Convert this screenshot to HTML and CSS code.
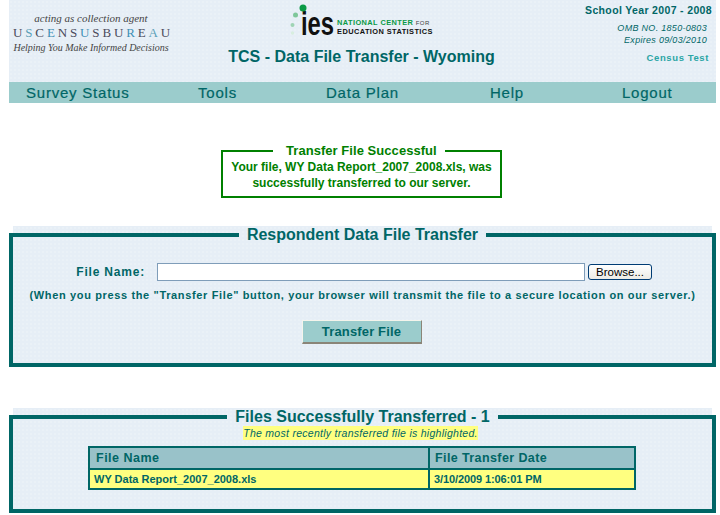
FILE: index.html
```html
<!DOCTYPE html>
<html lang="en">

<head>
    <meta charset="UTF-8">
    <title>TCS - Data File Transfer - Wyoming</title>
    <link rel="stylesheet" href="styles.css">
</head>

<body>
    <div class="header">
        <div class="census">
            <p class="census-top">acting as collection agent</p>
            <p class="census-name"><span>U</span><span class="c1">S</span><span>C</span><span class="c2">E</span><span>N</span><span>S</span><span class="c2">U</span><span>S</span><span>B</span><span>U</span><span class="c2">R</span><span>E</span><span class="c1">A</span><span>U</span></p>
            <p class="census-tag">Helping You Make Informed Decisions</p>
        </div>
        <div class="center">
            <div class="ies">
                <svg class="ies-dots" width="17" height="38" viewBox="0 0 17 38">
                    <circle cx="13" cy="8" r="3.5" fill="#0a9a46" />
                    <circle cx="5.5" cy="15" r="2.5" fill="#7fc79a" />
                    <circle cx="2.5" cy="25" r="2" fill="#9ed4b4" />
                    <circle cx="2.5" cy="33" r="1.7" fill="#d8eee0" />
                </svg>
                <span class="ies-word">ies</span>
                <div class="ies-name">
                    <div class="ies-line ies-green">NATIONAL CENTER <small>FOR</small></div>
                    <div class="ies-line">EDUCATION STATISTICS</div>
                </div>
            </div>
            <h1>TCS - Data File Transfer - Wyoming</h1>
        </div>
        <div class="meta">
            <p class="year">School Year 2007 - 2008</p>
            <p class="omb">OMB NO. 1850-0803<br>Expires 09/03/2010</p>
            <p class="test">Census Test</p>
        </div>
    </div>

    <div class="nav">
        <a href="#">Survey Status</a>
        <a href="#">Tools</a>
        <a href="#">Data Plan</a>
        <a href="#">Help</a>
        <a href="#">Logout</a>
    </div>

    <fieldset class="success">
        <legend>Transfer File Successful</legend>
        <p>Your file, WY Data Report_2007_2008.xls, was<br>successfully transferred to our server.</p>
    </fieldset>

    <div class="panel upload">
        <fieldset>
            <legend>Respondent Data File Transfer</legend>
            <div class="file-row">
                <label for="file">File Name:</label>
                <input id="file" type="text">
                <button class="browse" type="button">Browse...</button>
            </div>
            <p class="hint">(When you press the "Transfer File" button, your browser will transmit the file to a secure location on our server.)</p>
            <button class="transfer" type="button">Transfer File</button>
        </fieldset>
    </div>

    <div class="panel files">
        <fieldset>
            <legend>Files Successfully Transferred - 1</legend>
            <p class="note"><span>The most recently transferred file is highlighted.</span></p>
            <table>
                <thead>
                    <tr>
                        <th>File Name</th>
                        <th>File Transfer Date</th>
                    </tr>
                </thead>
                <tbody>
                    <tr>
                        <td>WY Data Report_2007_2008.xls</td>
                        <td class="date">3/10/2009 1:06:01 PM</td>
                    </tr>
                </tbody>
            </table>
        </fieldset>
    </div>
</body>

</html>
```

FILE: styles.css
```css
/* Reset */
body,
p,
h1,
fieldset,
legend {
    margin: 0;
    padding: 0;
}

body {
    font-family: 'Liberation Sans', Arial, sans-serif;
    background-color: white;
    color: #006666;
    padding: 0 4px 0 9px;
    height: 515px;
    box-sizing: border-box;
    overflow: hidden;
}

/* Header */
.header {
    display: flex;
    height: 82px;
    background-color: #e6eef6;
    background-image: radial-gradient(#eaf1f7 1px, transparent 1px);
    background-size: 4px 4px;
}

.census {
    width: 164px;
    padding-top: 12px;
    text-align: center;
    font-family: 'Liberation Serif', serif;
    color: #444;
}

.census-top {
    font-size: 11px;
    font-style: italic;
    line-height: 12px;
}

.census-name {
    font-size: 13px;
    letter-spacing: 2.85px;
    line-height: 15px;
    margin-top: 1px;
    padding-left: 4px;
    white-space: nowrap;
    color: #4a4a5a;
}

.census-name .c1 {
    color: #5a9fb8;
}

.census-name .c2 {
    color: #3f90b5;
}

.census-tag {
    font-size: 10px;
    font-style: italic;
    line-height: 13px;
    margin-top: 1px;
    white-space: nowrap;
}

.center {
    flex: 1;
    text-align: center;
}

.ies {
    display: flex;
    align-items: flex-start;
    justify-content: center;
    height: 41px;
    box-sizing: border-box;
    padding-top: 6px;
}

.ies-dots {
    position: relative;
    z-index: 1;
    margin: -6px -6px 0 0;
}

.ies-word {
    font-size: 34px;
    font-weight: bold;
    color: #111;
    line-height: 34px;
    transform: scaleX(0.7);
    transform-origin: left;
    width: 36px;
}

.ies-name {
    font-size: 7.4px;
    font-weight: bold;
    letter-spacing: 0.42px;
    color: #111;
    text-align: left;
    white-space: nowrap;
    margin-top: 13px;
}

.ies-line {
    height: 8.5px;
    line-height: 8.5px;
}

.ies-green {
    color: #0a9a46;
}

.ies-green small {
    font-size: 6px;
    font-weight: normal;
    color: #444;
}

h1 {
    font-size: 16px;
    font-weight: bold;
    line-height: 20px;
    margin-top: 6px;
}

.meta {
    width: 166px;
    text-align: right;
    padding-right: 4px;
    box-sizing: border-box;
}

.year {
    font-size: 10.5px;
    font-weight: bold;
    line-height: 12px;
    margin-top: 4px;
    letter-spacing: 0.35px;
}

.omb {
    font-size: 9px;
    font-style: italic;
    line-height: 12px;
    margin-top: 6px;
    padding-right: 5px;
    letter-spacing: 0.3px;
}

.test {
    font-size: 9.5px;
    font-weight: bold;
    line-height: 12px;
    margin-top: 6px;
    padding-right: 3px;
    letter-spacing: 0.6px;
    color: #2aa5a5;
}

/* Navigation */
.nav {
    display: grid;
    grid-template-columns: 172px 128px 164px 132px 111px;
    height: 21px;
    background-color: #9bcccc;
    line-height: 21px;
    font-size: 15px;
    letter-spacing: 0.78px;
    -webkit-text-stroke: 0.2px #006666;
}

.nav a {
    color: #006666;
    text-decoration: none;
    padding-left: 17px;
}

/* Success message */
.success {
    width: 281px;
    box-sizing: border-box;
    margin: 40px 0 0 212px;
    border: 2px solid #008000;
    color: #008000;
    font-weight: bold;
    font-size: 12px;
    line-height: 16px;
    padding: 1px 0 5px;
}

.success p {
    text-align: center;
}

.success legend {
    margin-left: 50px;
    padding: 0 8px 0 13px;
    font-size: 13px;
    letter-spacing: 0.05px;
    line-height: 15px;
}

/* Panels */
.panel {
    margin: 0 4px;
    background-color: #e6eef6;
    background-image: radial-gradient(#eaf1f7 1px, transparent 1px);
    background-size: 4px 4px;
}

.panel fieldset {
    margin: 0 -4px;
    border: 4px solid #006666;
    min-width: 0;
}

.panel legend {
    margin: 0 auto;
    padding: 0 8px;
    font-weight: bold;
    font-size: 16px;
    line-height: 18px;
}

.upload {
    margin-top: 28px;
}

.upload fieldset {
    height: 141px;
    box-sizing: border-box;
    text-align: center;
}

.file-row {
    display: flex;
    align-items: center;
    margin-top: 19px;
    height: 18px;
}

.file-row label {
    width: 132px;
    text-align: right;
    margin-right: 12px;
    font-size: 12px;
    font-weight: bold;
    letter-spacing: 0.8px;
}

.file-row input {
    width: 428px;
    height: 18px;
    box-sizing: border-box;
    border: 1px solid #7f9db9;
    background: white;
    padding: 0;
    margin: 0;
}

.browse {
    width: 64px;
    height: 16px;
    margin-left: 3px;
    padding: 0;
    border: 1px solid #003c74;
    border-radius: 3px;
    background: linear-gradient(#ffffff, #ecebe5);
    font-family: 'Liberation Sans', sans-serif;
    font-size: 11.5px;
    line-height: 14px;
    color: black;
}

.hint {
    font-size: 11px;
    font-weight: bold;
    line-height: 14px;
    margin-top: 7px;
    letter-spacing: 0.64px;
    white-space: nowrap;
}

.transfer {
    display: block;
    width: 120px;
    height: 24px;
    margin: 18px auto 0;
    position: relative;
    left: -1px;
    padding: 0;
    border-style: solid;
    border-width: 1px 1px 2px 1px;
    border-color: #f4f4ec #8a8578 #8a8578 #f4f4ec;
    background-color: #9bcccc;
    color: #006666;
    font-family: 'Liberation Sans', sans-serif;
    font-size: 13px;
    font-weight: bold;
    letter-spacing: 0.15px;
}

.files {
    margin-top: 41px;
}

.files fieldset {
    height: 105px;
    box-sizing: border-box;
}

.note {
    text-align: center;
    font-size: 10.5px;
    font-style: italic;
    line-height: 14px;
    height: 14px;
    color: #006666;
    letter-spacing: 0.28px;
}

.note span {
    display: inline-block;
    margin-right: 4px;
    background-color: #ffff80;
}

table {
    width: 548px;
    margin: 6px 0 0 75px;
    table-layout: fixed;
    border-collapse: collapse;
    border: 2px solid #006666;
}

th,
td {
    border: 2px solid #006666;
    text-align: left;
    font-weight: bold;
    box-sizing: border-box;
}

th {
    background-color: #99c2c9;
    height: 22px;
    padding: 0 6px;
    font-size: 12.5px;
    letter-spacing: 0.5px;
}

th + th {
    padding-left: 5px;
    letter-spacing: 0.4px;
}

td {
    background-color: #ffff80;
    height: 20px;
    padding: 0 4px;
    font-size: 11px;
}

.date {
    letter-spacing: -0.1px;
}

th:first-child {
    width: 340px;
}
```
